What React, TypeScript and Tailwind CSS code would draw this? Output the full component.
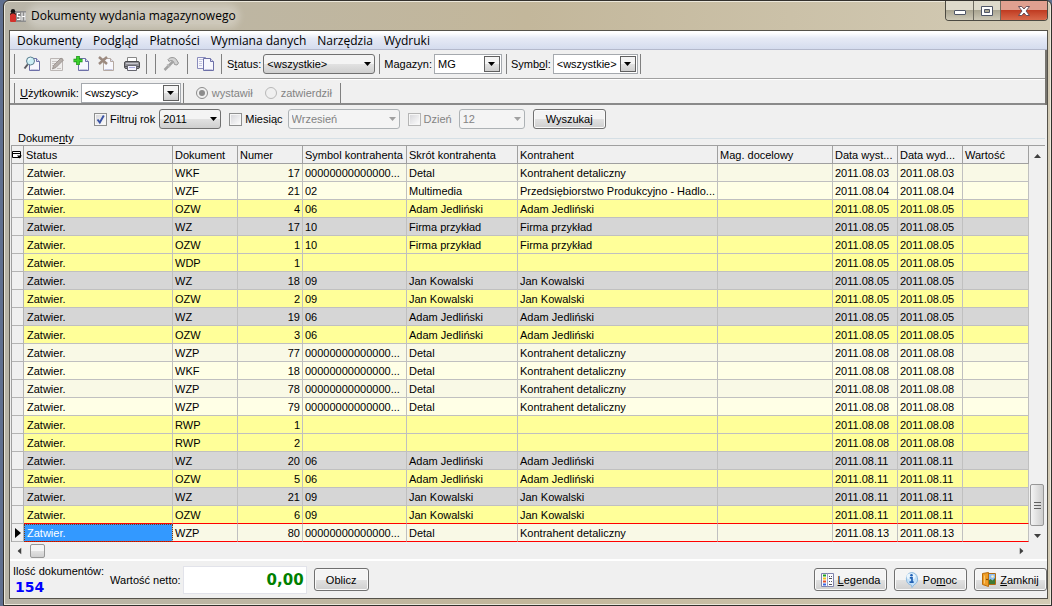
import React from 'react';

type Kind = 'c' | 'l' | 'y' | 'g';
type Row = [Kind, string, string, string, string, string, string];

const rows: Row[] = [
  ['l', 'WKF', '17', '00000000000000...', 'Detal', 'Kontrahent detaliczny', '2011.08.03'],
  ['c', 'WZF', '21', '02', 'Multimedia', 'Przedsiębiorstwo Produkcyjno - Hadlo...', '2011.08.04'],
  ['y', 'OZW', '4', '06', 'Adam Jedliński', 'Adam Jedliński', '2011.08.05'],
  ['g', 'WZ', '17', '10', 'Firma przykład', 'Firma przykład', '2011.08.05'],
  ['y', 'OZW', '1', '10', 'Firma przykład', 'Firma przykład', '2011.08.05'],
  ['y', 'WDP', '1', '', '', '', '2011.08.05'],
  ['g', 'WZ', '18', '09', 'Jan Kowalski', 'Jan Kowalski', '2011.08.05'],
  ['y', 'OZW', '2', '09', 'Jan Kowalski', 'Jan Kowalski', '2011.08.05'],
  ['g', 'WZ', '19', '06', 'Adam Jedliński', 'Adam Jedliński', '2011.08.05'],
  ['y', 'OZW', '3', '06', 'Adam Jedliński', 'Adam Jedliński', '2011.08.05'],
  ['l', 'WZP', '77', '00000000000000...', 'Detal', 'Kontrahent detaliczny', '2011.08.08'],
  ['c', 'WKF', '18', '00000000000000...', 'Detal', 'Kontrahent detaliczny', '2011.08.08'],
  ['l', 'WZP', '78', '00000000000000...', 'Detal', 'Kontrahent detaliczny', '2011.08.08'],
  ['c', 'WZP', '79', '00000000000000...', 'Detal', 'Kontrahent detaliczny', '2011.08.08'],
  ['y', 'RWP', '1', '', '', '', '2011.08.08'],
  ['y', 'RWP', '2', '', '', '', '2011.08.08'],
  ['g', 'WZ', '20', '06', 'Adam Jedliński', 'Adam Jedliński', '2011.08.11'],
  ['y', 'OZW', '5', '06', 'Adam Jedliński', 'Adam Jedliński', '2011.08.11'],
  ['g', 'WZ', '21', '09', 'Jan Kowalski', 'Jan Kowalski', '2011.08.11'],
  ['y', 'OZW', '6', '09', 'Jan Kowalski', 'Jan Kowalski', '2011.08.11'],
  ['l', 'WZP', '80', '00000000000000...', 'Detal', 'Kontrahent detaliczny', '2011.08.13'],
];

const fills: Record<Kind, string> = {
  c: 'bg-[#ffffe6]',
  l: 'bg-[#f9f9e6]',
  y: 'bg-[#ffff99]',
  g: 'bg-[#d6d6d6]',
};

const raised = 'bg-linear-to-b from-[#f4f4f4] from-50% via-[#e2e2e2] via-50% to-[#cfcfcf]';

function Sep() {
  return <span className="h-5 w-px shrink-0 bg-[#808080]" />;
}

function Arrow({ className }: { className: string }) {
  return (
    <svg viewBox="0 0 7 4" className={`h-1 w-[7px] ${className}`} aria-hidden="true">
      <path d="M0 0h7L3.5 4z" fill="currentColor" />
    </svg>
  );
}

type PickProps = { id: string; value: string; width: string; kind?: 'raised' | 'box' | 'off' };

function Pick({ id, value, width, kind = 'raised' }: PickProps) {
  const look =
    kind === 'raised'
      ? `rounded-[3px] border border-[#707070] ${raised}`
      : kind === 'off'
        ? 'rounded-[3px] border border-[#adb2b5] bg-[#f4f4f4] text-[#838383] disabled:opacity-100'
        : 'border border-[#a5a9ae] bg-white';
  return (
    <span className={`relative h-5 shrink-0 ${width}`}>
      <select id={id} disabled={kind === 'off'} className={`size-full appearance-none px-[3px] leading-4 ${look}`}>
        <option>{value}</option>
      </select>
      {kind === 'box' ? (
        <span className={`pointer-events-none absolute inset-y-0.5 right-0.5 flex w-4 items-center justify-center border border-[#606060] ${raised}`}>
          <Arrow className="text-black" />
        </span>
      ) : (
        <Arrow className={`pointer-events-none absolute top-2 right-1 ${kind === 'off' ? 'text-[#a0a0a0]' : 'text-black'}`} />
      )}
    </span>
  );
}

function Check({ id, label, checked = false, off = false }: { id: string; label: string; checked?: boolean; off?: boolean }) {
  return (
    <span className="flex items-center gap-[3px]">
      <span className="relative flex size-[13px]">
        <input
          id={id}
          type="checkbox"
          defaultChecked={checked}
          disabled={off}
          className={`peer size-full appearance-none border bg-linear-to-br from-[#d4d4d8] to-white shadow-[inset_0_0_0_1px_#f6f6f6] ${off ? 'border-[#b5b5b5]' : 'border-[#8e8f8f]'}`}
        />
        <svg viewBox="0 0 13 13" className="pointer-events-none absolute inset-0 hidden size-full peer-checked:block" aria-hidden="true">
          <path d="M3.5 6.5l2.3 3L9.8 2.5" fill="none" stroke="#3a53a4" strokeWidth="1.9" />
        </svg>
      </span>
      <label htmlFor={id} className={off ? 'text-[#838383]' : ''}>{label}</label>
    </span>
  );
}

function Radio({ id, label, checked = false }: { id: string; label: string; checked?: boolean }) {
  return (
    <span className="flex items-center gap-1">
      <span className="relative flex size-3">
        <input id={id} name="role" type="radio" defaultChecked={checked} disabled className="peer size-full appearance-none rounded-full border border-[#b8b8b8] bg-[#f0f0f0] checked:border-[#8c8c8c]" />
        <span className="pointer-events-none absolute inset-[3px] hidden rounded-full bg-[#8c8c8c] peer-checked:block" />
      </span>
      <label htmlFor={id} className="text-[#838383]">{label}</label>
    </span>
  );
}

function PageShape({ x = 4, y = 2, stroke = '#6d70a8' }: { x?: number; y?: number; stroke?: string }) {
  return (
    <g transform={`translate(${x} ${y})`}>
      <path d="M.5.5h7l3 3v9H.5z" fill="#f7f7fd" stroke={stroke} />
      <path d="M7.5.5v3h3" fill="#dcdcf0" stroke={stroke} />
      <path d="M1.5 11.5h8" stroke="#c5c6e0" />
    </g>
  );
}

function ToolButton({ label, children }: { label: string; children: React.ReactNode }) {
  return (
    <button type="button" aria-label={label} className="flex h-5 w-[25px] shrink-0 items-center justify-center">
      <svg viewBox="0 0 18 16" className="h-4 w-[18px]" aria-hidden="true">{children}</svg>
    </button>
  );
}

function PushButton({ children, className }: { children: React.ReactNode; className: string }) {
  return (
    <button type="button" className={`flex shrink-0 items-center justify-center rounded-[3px] border border-[#707070] shadow-[inset_0_0_0_1px_#fafafa] ${raised} ${className}`}>
      {children}
    </button>
  );
}

function AppLogo() {
  return (
    <svg viewBox="0 0 16 14" className="h-3.5 w-4" aria-hidden="true">
      <rect x="5" y="2" width="11" height="11" fill="#8b8b8b" />
      <rect x="0" y="4" width="6" height="9" rx="1" fill="#d3302a" />
      <circle cx="3" cy="2.2" r="2.2" fill="#111" />
      <path d="M0 5.5l3-2 3 2" fill="none" stroke="#222" />
      <path d="M10 4.5H7.5v3H10v3H7M12 3.5v8M15 3.5v8M12 7.5h3" fill="none" stroke="#fff" strokeWidth="1.1" />
    </svg>
  );
}

function LegendIcon() {
  return (
    <svg viewBox="0 0 13 14" className="h-3.5 w-[13px]" aria-hidden="true">
      <path d="M.5.5h12v13H.5z" fill="#fbfbff" stroke="#7f83ad" />
      <path d="M6.500.5v13" stroke="#9ea1c4" />
      <path d="M2 2.500h3" stroke="#21a121" strokeWidth="2" />
      <path d="M2 5.500h3" stroke="#f2c21a" strokeWidth="2" />
      <path d="M2 8.500h3" stroke="#e2502c" strokeWidth="2" />
      <path d="M2 11.500h3" stroke="#3c66e0" strokeWidth="2" />
      <path d="M8 3.500h1m1 0h1M8 5.500h3M8 8.500h1m1 0h1M8 11.500h3" stroke="#55565f" />
    </svg>
  );
}

function InfoIcon() {
  return (
    <svg viewBox="0 0 15 16" className="h-4 w-[15px]" aria-hidden="true">
      <path d="M7.500.5a6.500 6.500 0 0 1 2.500 12.300L8 15.500l-.5-2.300A6.500 6.500 0 0 1 7.500.5z" fill="#c3e0f8" stroke="#8db8de" />
      <ellipse cx="7" cy="4.500" rx="4.500" ry="3" fill="#e9f5fe" />
      <circle cx="7.500" cy="3.300" r="1.300" fill="#2161b5" />
      <path d="M5.800 5.800h2.200v4M5.500 10.200h4.200" fill="none" stroke="#2161b5" strokeWidth="1.700" />
    </svg>
  );
}

function DoorIcon() {
  return (
    <svg viewBox="0 0 14 15" className="h-[15px] w-3.5" aria-hidden="true">
      <path d="M5.500 1.500h8v11h-8z" fill="#8ebcf0" stroke="#b06a10" />
      <path d="M6 9l2.500-2 2 1.500L13 6v6H6z" fill="#3f7a33" />
      <circle cx="10.500" cy="4.500" r="1.300" fill="#fff4b8" />
      <path d="M.5 1.500L6.500.5v14l-6-2z" fill="#ef9d25" stroke="#b96c0d" />
      <path d="M2.500 3.500v8" stroke="#f9c66f" />
      <circle cx="5" cy="7.500" r=".8" fill="#5f3505" />
    </svg>
  );
}

const menu = ['Dokumenty', 'Podgląd', 'Płatności', 'Wymiana danych', 'Narzędzia', 'Wydruki'];
const heads = ['Status', 'Dokument', 'Numer', 'Symbol kontrahenta', 'Skrót kontrahenta', 'Kontrahent', 'Mag. docelowy', 'Data wyst...', 'Data wyd...', 'Wartość'];

export default function App() {
  return (
    <div className="flex min-h-screen flex-col bg-[#5f6f8f] pl-[3px] font-['Liberation_Sans',Arial,sans-serif] text-[11px] leading-[14px] text-black">
      <div className="flex grow flex-col rounded-t-md border border-[#33312d] bg-linear-to-r from-[#b9b5a8] via-[#c3b79b] to-[#d3cbb5] pr-[3px] pb-[6px] pl-[5px] shadow-[inset_0_0_0_1px_#ece8db]">
        <header className="flex h-[29px] shrink-0 items-start justify-between">
          <div className="mt-[5px] flex h-5 items-center gap-[5px] pl-px">
            <AppLogo />
            <h1 className="rounded-full bg-white/25 font-['Open_Sans','Noto_Sans',sans-serif] text-[12px] leading-4 whitespace-nowrap shadow-[0_0_6px_4px_rgba(255,255,255,0.25)]">Dokumenty wydania magazynowego</h1>
          </div>
          <div className="flex h-5 overflow-hidden rounded-b-[4px] border border-t-0 border-[#4c4a42]">
            <button type="button" aria-label="Minimalizuj" className="flex w-7 items-center justify-center border-r border-[#6d6a5f] bg-linear-to-b from-[#dedacb] from-50% via-[#aaa591] via-50% to-[#cdc8b6] pt-1">
              <svg viewBox="0 0 12 5" className="h-[5px] w-3" aria-hidden="true"><rect x=".5" y=".5" width="11" height="4" rx=".5" fill="#fff" stroke="#4f5566" /></svg>
            </button>
            <button type="button" aria-label="Maksymalizuj" className="flex w-[27px] items-center justify-center border-r border-[#6d6a5f] bg-linear-to-b from-[#dedacb] from-50% via-[#aaa591] via-50% to-[#cdc8b6]">
              <svg viewBox="0 0 12 10" className="h-2.5 w-3" aria-hidden="true"><path d="M.5.5h11v9H.5zM3.5 3.5h5v3h-5z" fill="#fff" fillRule="evenodd" stroke="#4f5566" /></svg>
            </button>
            <button type="button" aria-label="Zamknij okno" className="flex w-[46px] items-center justify-center bg-linear-to-b from-[#e0a090] from-50% via-[#c03c22] via-50% to-[#d8684a]">
              <svg viewBox="0 0 12 10" className="h-2.5 w-3" aria-hidden="true"><path d="M.5.5h3.3L6 3 8.200.5h3.3L8 5l3.500 4.500H8.200L6 7 3.800 9.500H.5L4 5z" fill="#fff" stroke="#5a4450" strokeWidth=".9" /></svg>
            </button>
          </div>
        </header>

        <main className="flex grow flex-col border border-[#55524a] bg-[#f0f0f0]">
          <nav className="flex h-[19px] shrink-0 items-end gap-[11px] border-b border-[#b4b9cc] bg-linear-to-b from-white from-10% via-[#e6eaf5] via-40% to-[#d5dcee] px-[7px] font-['Open_Sans','Noto_Sans',sans-serif] text-[12px] leading-4">
            {menu.map((m) => (
              <button key={m} type="button" className="whitespace-nowrap">{m}</button>
            ))}
          </nav>

          <div className="flex shrink-0 flex-col border-r-2 border-[#77756f]">
            <div className="flex h-[29px] shrink-0 items-center border-b border-[#a0a0a0] pl-1 whitespace-nowrap">
              <Sep />
              <span className="flex pl-1">
                <ToolButton label="Podgląd">
                  <PageShape x={6} y={2} />
                  <path d="M5 8L1.500 12.500" stroke="#5a5a60" strokeWidth="2" />
                  <circle cx="7.500" cy="5" r="4" fill="#cdeff5" stroke="#5d7f90" />
                  <path d="M5.500 4.500a2 2 0 0 1 2-2" fill="none" stroke="#fff" />
                </ToolButton>
                <ToolButton label="Edytuj">
                  <path d="M2.500 2.500h12v12h-12z" fill="#efeeed" stroke="#bbb6b4" />
                  <path d="M4 5.500h6M4 7.500h5M4 9.500h4M9 12.500h4" stroke="#c9c5c3" />
                  <path d="M4.500 13l1-3.500L13 2l2.500 2L8 11.500z" fill="#b5aeaa" stroke="#938b88" strokeWidth=".8" />
                </ToolButton>
                <ToolButton label="Dodaj">
                  <PageShape x={5} y={2} />
                  <path d="M5 0v9M.5 4.500h9" stroke="#149014" strokeWidth="3.600" />
                  <path d="M5 .5v8M1 4.500h8" stroke="#3ccf2c" strokeWidth="2.200" />
                </ToolButton>
                <ToolButton label="Usuń">
                  <PageShape x={5} y={2} stroke="#b5a9a2" />
                  <path d="M1 1l8 7M9 1L1 8" stroke="#9c8a80" strokeWidth="2.500" />
                </ToolButton>
                <ToolButton label="Drukuj">
                  <path d="M4.500 1.500h9v5h-9z" fill="#fff" stroke="#888" />
                  <rect x="1.500" y="5.500" width="15" height="7" rx="1.500" fill="#8f8f96" stroke="#4c4c50" />
                  <path d="M3 7.500h12" stroke="#c5c5cc" />
                  <path d="M2 10.500h14" stroke="#55555c" />
                  <path d="M4.500 9.500h9v5h-9z" fill="#f4f4ff" stroke="#66666f" />
                  <path d="M6 11.500h6" stroke="#a9a9e0" />
                </ToolButton>
              </span>
              <span className="flex items-center gap-2 px-0.5"><Sep /><Sep /></span>
              <ToolButton label="Narzędzia">
                <path d="M2.500 14L11 5.500" stroke="#a3a3a3" strokeWidth="2.500" />
                <path d="M6 3.500C8 1 12 1 14 3l2.500 4-1.500 2-2.500-.5-1-3C10 4 8 4.500 7 5.500z" fill="#d2d2d2" stroke="#999" />
                <path d="M5 8.500L8 11" stroke="#b9b9b9" strokeWidth="1.500" />
              </ToolButton>
              <span className="flex pl-1"><Sep /></span>
              <span className="flex px-1">
                <ToolButton label="Kopiuj">
                  <path d="M1.500 1.500h8v11h-8z" fill="#f7f7fd" stroke="#8a8cbc" />
                  <path d="M3 3.500h5M3 5.500h3M3 7.500h3M3 9.500h3" stroke="#c5c6e0" />
                  <PageShape x={7} y={2} />
                </ToolButton>
              </span>
              <Sep />
              <label htmlFor="status" className="pr-0.5 pl-[5px]">S<u>t</u>atus:</label>
              <Pick id="status" value="<wszystkie>" width="w-28" />
              <span className="flex px-1"><Sep /></span>
              <label htmlFor="magazyn" className="pr-0.5">Magazyn:</label>
              <Pick id="magazyn" value="MG" width="w-[68px]" kind="box" />
              <span className="flex px-1"><Sep /></span>
              <label htmlFor="symbol" className="pr-0.5">Symb<u>o</u>l:</label>
              <Pick id="symbol" value="<wszystkie>" width="w-[85px]" kind="box" />
              <span className="flex pl-0.5"><Sep /></span>
            </div>

            <div className="flex h-[26px] shrink-0 items-end border-t border-b-2 border-t-white border-b-[#8a8a8a] pl-1 whitespace-nowrap">
              <Sep />
              <label htmlFor="uzytkownik" className="pb-[3px] pl-[5px]"><u>U</u>żytkownik:</label>
              <span className="flex px-0.5"><Pick id="uzytkownik" value="<wszyscy>" width="w-[100px]" kind="box" /></span>
              <Sep />
              <span className="flex gap-3 pr-2 pb-[3px] pl-3">
                <Radio id="wystawil" label="wystawił" checked />
                <Radio id="zatwierdzil" label="zatwierdził" />
              </span>
              <Sep />
            </div>
          </div>

          <div className="flex shrink-0 items-center gap-2 pt-1 pl-[84px] whitespace-nowrap">
            <span className="flex items-center gap-1">
              <Check id="rok" label="Filtruj rok" checked />
              <Pick id="rokv" value="2011" width="w-[62px]" />
            </span>
            <span className="flex items-center gap-[5px]">
              <Check id="mies" label="Miesiąc" />
              <Pick id="miesv" value="Wrzesień" width="w-28" kind="off" />
            </span>
            <span className="flex items-center gap-[7px]">
              <Check id="dzien" label="Dzień" off />
              <Pick id="dzienv" value="12" width="w-[66px]" kind="off" />
            </span>
            <PushButton className="h-5 w-[73px]">Wyszukaj</PushButton>
          </div>

          <section className="flex flex-col pt-0.5 pr-0.5">
            <h2 className="flex items-center gap-1.5 pl-2">
              <span>Dokume<u>n</u>ty</span>
              <span className="h-px grow bg-[#d5dfe5]" />
            </h2>
            <div className="flex pl-px">
              <table className="min-w-0 grow table-fixed border-separate border-spacing-0 border-t border-l border-[#a0a0a0]">
                <colgroup>
                  <col className="w-[12px]" />
                  <col className="w-[149px]" />
                  <col className="w-[65px]" />
                  <col className="w-[65px]" />
                  <col className="w-[104px]" />
                  <col className="w-[111px]" />
                  <col className="w-[200px]" />
                  <col className="w-[115px]" />
                  <col className="w-[65px]" />
                  <col className="w-[65px]" />
                  <col />
                </colgroup>
                <thead>
                  <tr className="h-[18px] text-left">
                    <th aria-label="Kolumny" className="border-r border-b border-[#a0a0a0] p-0">
                      <svg viewBox="0 0 10 8" className="h-2 w-2.5" aria-hidden="true"><path d="M.5.5h8v6h-8z" fill="#fff" stroke="#000" /><path d="M1 2.500h7" stroke="#000" /><path d="M5 4.500h5L7.500 7.500z" /></svg>
                    </th>
                    {heads.map((h) => (
                      <th key={h} className="overflow-hidden border-r border-b border-[#a0a0a0] p-0 pl-0.5 font-normal whitespace-nowrap">{h}</th>
                    ))}
                  </tr>
                </thead>
                <tbody>
                  {rows.map((r, i) => {
                    const last = i === rows.length - 1;
                    const cell = `overflow-hidden border-r border-b border-r-[#c0c0c0] p-0 whitespace-nowrap ${i >= rows.length - 2 ? 'border-b-[#ff0000]' : 'border-b-[#c0c0c0]'}`;
                    return (
                      <tr key={i} className={`h-[18px] ${fills[r[0]]}`}>
                        <td className="border-r border-b border-[#b4b4b4] bg-[#f0f0f0] p-0">
                          {last && (
                            <svg viewBox="0 0 6 10" className="ml-[3px] h-2.5 w-1.5" aria-hidden="true"><path d="M0 0l6 5-6 5z" /></svg>
                          )}
                        </td>
                        <td className={`${cell} pl-[3px] ${last ? 'bg-[#3399ff] text-white outline-1 -outline-offset-1 outline-[#7a3c10] outline-dotted' : ''}`}>Zatwier.</td>
                        <td className={`${cell} pl-0.5`}>{r[1]}</td>
                        <td className={`${cell} pr-0.5 text-right`}>{r[2]}</td>
                        <td className={`${cell} pl-0.5`}>{r[3]}</td>
                        <td className={`${cell} pl-0.5`}>{r[4]}</td>
                        <td className={`${cell} pl-0.5`}>{r[5]}</td>
                        <td className={cell} />
                        <td className={`${cell} pl-0.5`}>{r[6]}</td>
                        <td className={`${cell} pl-0.5`}>{r[6]}</td>
                        <td className={cell} />
                      </tr>
                    );
                  })}
                </tbody>
              </table>
              <div className="flex w-4 shrink-0 flex-col items-center justify-between border-t border-[#a0a0a0] bg-[#f0f0f0] pt-2 pb-1">
                <Arrow className="rotate-180 text-[#404040]" />
                <div className="flex grow flex-col justify-end pb-2">
                  <div className="flex h-[42px] w-3.5 flex-col items-center justify-center gap-px rounded-[2px] border border-[#979797] bg-linear-to-r from-[#f4f4f4] to-[#cdcdcd]">
                    <span className="h-0.5 w-[7px] border-b border-[#606060]" />
                    <span className="h-0.5 w-[7px] border-b border-[#606060]" />
                    <span className="h-0.5 w-[7px] border-b border-[#606060]" />
                  </div>
                </div>
                <Arrow className="text-[#404040]" />
              </div>
            </div>
            <div className="flex h-[17px] items-center pr-5 pl-1.5">
              <Arrow className="rotate-90 text-[#404040]" />
              <span className={`ml-[7px] h-3.5 w-[15px] rounded-[2px] border border-[#979797] ${raised}`} />
              <span className="grow" />
              <Arrow className="-rotate-90 text-[#404040]" />
            </div>
          </section>

          <footer className="flex grow items-center border-t-2 border-white pl-[3px] whitespace-nowrap">
            <div className="flex flex-col self-start pt-[3px]">
              <span>Ilość dokumentów:</span>
              <output className="pl-0.5 font-['DejaVu_Sans',sans-serif] text-[14px] leading-[18px] font-bold text-[#0000ff]">154</output>
            </div>
            <label htmlFor="netto" className="pr-0.5 pl-1.5">Wartość netto:</label>
            <input id="netto" readOnly value="0,00" className="h-7 w-[124px] border border-[#e2e3ea] bg-white pr-0.5 text-right font-['DejaVu_Sans',sans-serif] text-[15px] font-bold text-[#008000]" />
            <span className="flex pl-[7px]"><PushButton className="h-[23px] w-[55px]">Oblicz</PushButton></span>
            <span className="grow" />
            <span className="flex gap-[7px]">
              <PushButton className="h-[23px] w-[73px] gap-1"><LegendIcon /><span><u>L</u>egenda</span></PushButton>
              <PushButton className="h-[23px] w-[73px] gap-1"><InfoIcon /><span>Po<u>m</u>oc</span></PushButton>
              <PushButton className="h-[23px] w-[73px] gap-1"><DoorIcon /><span><u>Z</u>amknij</span></PushButton>
            </span>
          </footer>
        </main>
      </div>
    </div>
  );
}
